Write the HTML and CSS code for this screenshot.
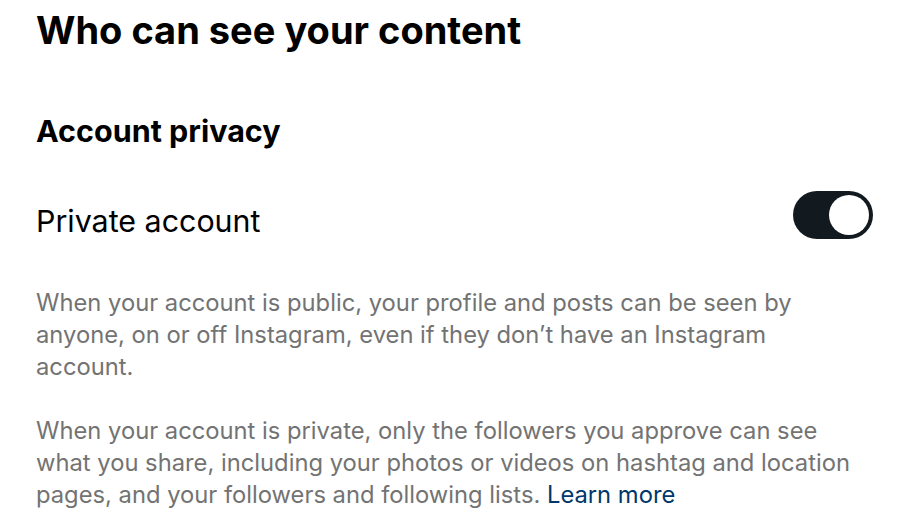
FILE: index.html
```html
<!DOCTYPE html>
<html lang="en">
<head>
    <meta charset="UTF-8">
    <title>Who can see your content</title>
    <link rel="stylesheet" href="styles.css">
</head>
<body>
    <div class="settings">
        <h1 class="page-title">Who can see your content</h1>

        <section class="privacy">
            <h2 class="section-title">Account privacy</h2>

            <div class="toggle-row">
                <span class="toggle-label">Private account</span>
                <button class="switch on" aria-label="Private account" onclick="this.classList.toggle('on')">
                    <span class="knob"></span>
                </button>
            </div>

            <p class="note">When your account is public, your profile and posts can be seen by anyone, on or off Instagram, even if they don’t have an Instagram account.</p>
            <p class="note">When your account is private, only the followers you approve can see what you share, including your photos or videos on hashtag and location pages, and your followers and following lists. <a href="#" class="learn">Learn more</a></p>
        </section>
    </div>
</body>
</html>
```

FILE: styles.css
```css
body {
    margin: 0;
    background: #fff;
    color: #000;
    font-family: Inter, "Liberation Sans", sans-serif;
}
.settings {
    padding: 7px 27px 0 36px;
}
.page-title {
    margin: 0;
    font-size: 38px;
    font-weight: 700;
    line-height: 46px;
}
.section-title {
    margin: 60px 0 0;
    font-size: 30.5px;
    font-weight: 700;
    line-height: 36px;
}
.toggle-row {
    display: flex;
    align-items: center;
    justify-content: space-between;
    margin-top: 42px;
}
.toggle-label {
    padding-top: 12px;
    font-size: 30.4px;
    line-height: 36px;
}
.switch {
    width: 80px;
    height: 48px;
    padding: 4px;
    border: none;
    border-radius: 24px;
    background: #dbdbdb;
    cursor: pointer;
    display: flex;
}
.switch.on {
    background: #121a20;
    justify-content: flex-end;
}
.knob {
    width: 40px;
    height: 40px;
    border-radius: 50%;
    background: #fff;
}
.note {
    max-width: 826px;
    margin: 48px 0 0;
    font-size: 23.75px;
    line-height: 32px;
    color: #737373;
}
.note + .note {
    margin-top: 32px;
}
.learn {
    color: #00376b;
    text-decoration: none;
}
```
